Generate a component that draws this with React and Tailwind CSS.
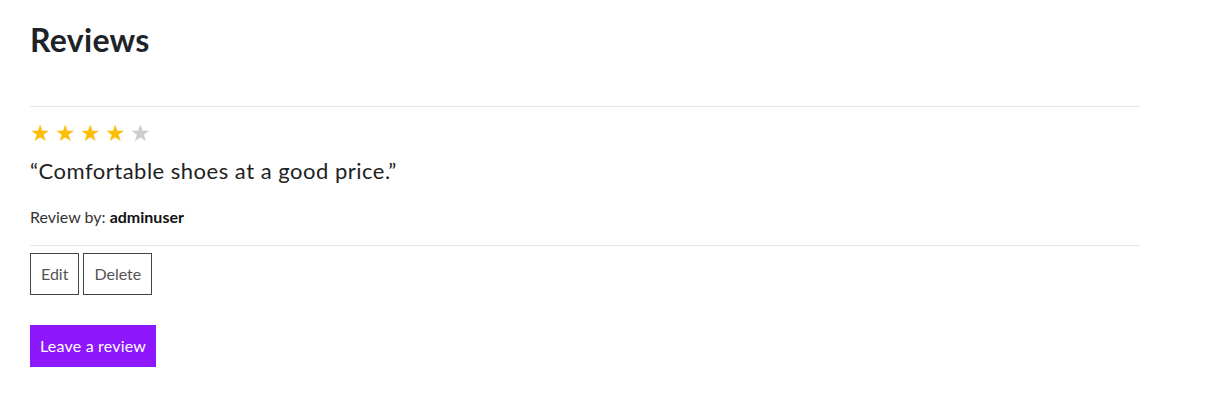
import React from "react";

const Star = ({ filled }) => (
  <span className={filled ? "text-[#fbbf07]" : "text-[#cccccc]"}>★</span>
);

export default function App() {
  const rating = 4;
  return (
    <div
      className="bg-white min-h-[404px] px-[30px] text-[#212529]"
      style={{ fontFamily: "Lato, 'Noto Sans', sans-serif" }}
    >
      <div className="w-[1110px]">
        <h2 className="pt-[20px] text-[32px] tracking-[0.3px] font-bold leading-[40px] text-[#1e232a]">
          Reviews
        </h2>

        {/* Review item */}
        <div className="mt-[46px] border-t border-b border-[#e5e5e5] pt-[12px] pb-[18px]">
          <div className="flex gap-[4px] text-[23px] leading-[26px]">
            {[1, 2, 3, 4, 5].map((n) => (
              <Star key={n} filled={n <= rating} />
            ))}
          </div>
          <p className="mt-[11px] text-[22px] tracking-[0.5px] leading-[30px] text-[#222222]">
            “Comfortable shoes at a good price.”
          </p>
          <p className="mt-[21px] text-[16px] leading-[20px] text-[#333333]">
            Review by: <strong className="font-bold text-[#111111]">adminuser</strong>
          </p>
        </div>

        <div className="mt-[7px] flex gap-[4px]">
          <button className="h-[42px] border border-[#444444] px-[10px] text-[16px] text-[#555555]">
            Edit
          </button>
          <button className="h-[42px] border border-[#444444] px-[10px] text-[16px] text-[#555555]">
            Delete
          </button>
        </div>

        <button className="mt-[30px] h-[42px] bg-[#8f17fc] px-[10px] text-[16px] tracking-[0.2px] text-white">
          Leave a review
        </button>
      </div>
    </div>
  );
}
